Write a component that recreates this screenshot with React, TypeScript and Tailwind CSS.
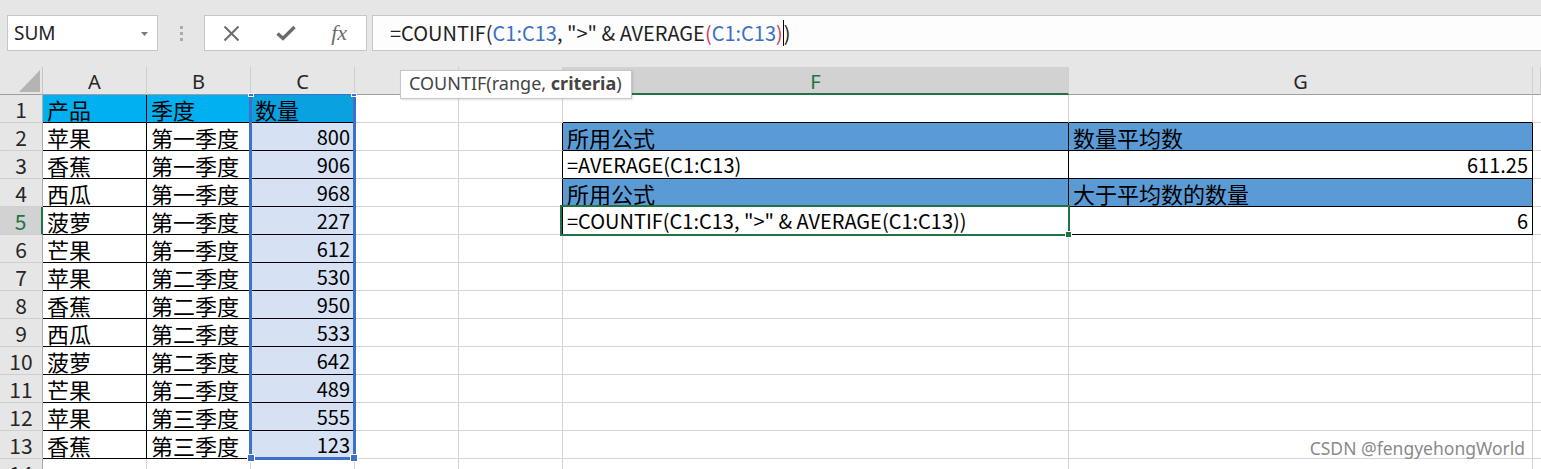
import React from 'react'

// ── Excel-style sheet: COUNTIF above-average demo ──────────────────────────

const COLS = [
  { id: 'A', w: 'w-[104px]' },
  { id: 'B', w: 'w-[104px]' },
  { id: 'C', w: 'w-[104px]' },
  { id: 'D', w: 'w-[104px]' },
  { id: 'E', w: 'w-[104px]' },
  { id: 'F', w: 'w-[506px]' },
  { id: 'G', w: 'w-[464px]' },
  { id: 'H', w: 'flex-1' },
]
const IDS = COLS.map((c) => c.id)

const fruits = ['苹果', '香蕉', '西瓜', '菠萝', '芒果', '苹果', '香蕉', '西瓜', '菠萝', '芒果', '苹果', '香蕉']
const quarters = ['第一季度', '第一季度', '第一季度', '第一季度', '第一季度', '第二季度', '第二季度', '第二季度', '第二季度', '第二季度', '第三季度', '第三季度']
const qty = [800, 906, 968, 227, 612, 530, 950, 533, 642, 489, 555, 123]

const data: Record<string, string> = {
  A1: '产品',
  B1: '季度',
  C1: '数量',
  F2: '所用公式',
  G2: '数量平均数',
  F3: '=AVERAGE(C1:C13)',
  G3: '611.25',
  F4: '所用公式',
  G4: '大于平均数的数量',
  F5: '=COUNTIF(C1:C13, ">" & AVERAGE(C1:C13))',
  G5: '6',
}
fruits.forEach((f, i) => {
  data[`A${i + 2}`] = f
  data[`B${i + 2}`] = quarters[i]
  data[`C${i + 2}`] = String(qty[i])
})

const rightAligned = (r: number, c: string) =>
  (c === 'C' && r >= 2 && r <= 13) || (c === 'G' && (r === 3 || r === 5))

const boxed = (r: number, c: string) =>
  (r >= 1 && r <= 13 && ['A', 'B', 'C'].includes(c)) || (r >= 2 && r <= 5 && ['F', 'G'].includes(c))

function fill(r: number, c: string) {
  if (r === 1 && (c === 'A' || c === 'B')) return 'bg-[#00b0f0]'
  if (r === 1 && c === 'C') return 'bg-[#0aa1e0]'
  if (c === 'C' && r >= 2 && r <= 13) return 'bg-[#d6e1f3]'
  if ((r === 2 || r === 4) && (c === 'F' || c === 'G')) return 'bg-[#5b9bd5]'
  return 'bg-white'
}

const isCjk = (s: string) => /[\u4e00-\u9fff]/.test(s)

function Cell({ r, col }: { r: number; col: (typeof COLS)[number] }) {
  const idx = IDS.indexOf(col.id)
  const next = IDS[idx + 1]
  const rb = boxed(r, col.id) || (next ? boxed(r, next) : false)
  const bb = boxed(r, col.id) || boxed(r + 1, col.id)
  const value = data[`${col.id}${r}`] ?? ''
  return (
    <div
      className={[
        col.w,
        'shrink-0 h-full flex items-end pb-[2px] px-[4px] border-r border-b whitespace-nowrap text-black',
        rb ? 'border-r-black' : 'border-r-[#d4d4d4]',
        bb ? 'border-b-black' : 'border-b-[#d4d4d4]',
        rightAligned(r, col.id) ? 'justify-end' : 'justify-start',
        isCjk(value) ? 'text-[22px]' : 'text-[20px]',
        fill(r, col.id),
      ].join(' ')}
    >
      {value}
    </div>
  )
}

function HeaderRow() {
  return (
    <div className="flex h-[28px] font-['Noto_Sans',sans-serif] text-[20px] leading-[20px]">
      <div className="w-[43px] shrink-0 border-r border-b border-r-[#c6c6c6] border-b-[#9e9e9e] relative">
        <svg className="absolute left-[19px] top-[3px]" width="21" height="22" viewBox="0 0 21 22">
          <polygon points="21,0 21,22 0,22" fill="#b4b4b4" />
        </svg>
      </div>
      {COLS.map((c) => (
        <div
          key={c.id}
          className={[
            c.w,
            'shrink-0 flex items-end justify-center border-r border-r-[#cfcfcf]',
            c.id === 'F'
              ? 'bg-[#d2d2d2] text-[#217346] border-b-2 border-b-[#217346] pb-[1px]'
              : 'text-[#262626] border-b border-b-[#9e9e9e] pb-[2px]',
          ].join(' ')}
        >
          {c.id === 'H' ? '' : c.id}
        </div>
      ))}
    </div>
  )
}

function SheetRow({ r }: { r: number }) {
  const active = r === 5
  return (
    <div className="flex h-[28px]">
      <div
        className={[
          'w-[43px] shrink-0 flex items-end justify-center pb-[2px] border-b border-b-[#cfcfcf] text-[21px]',
          active
            ? 'bg-[#d2d2d2] text-[#217346] border-r-2 border-r-[#217346]'
            : 'bg-[#e6e6e6] text-[#262626] border-r border-r-[#ababab]',
        ].join(' ')}
      >
        {r}
      </div>
      {COLS.map((c) => (
        <Cell key={c.id} r={r} col={c} />
      ))}
    </div>
  )
}

function Toolbar() {
  return (
    <div className="h-[67px] pt-[15px] flex items-start">
      <div className="ml-[7px] w-[151px] h-[36px] shrink-0 bg-white border border-[#c6c6c6] flex items-center pl-[6px] relative font-['Noto_Sans',sans-serif] text-[19px] text-[#222]">
        SUM
        <svg className="absolute left-[133px] top-[16px]" width="7" height="4" viewBox="0 0 7 4">
          <polygon points="0,0 7,0 3.5,4" fill="#7a7a7a" />
        </svg>
      </div>
      <div className="w-[46px] h-[36px] shrink-0 flex flex-col items-center justify-center gap-[3px]">
        <span className="block w-[3px] h-[3px] bg-[#ababab]" />
        <span className="block w-[3px] h-[3px] bg-[#ababab]" />
        <span className="block w-[3px] h-[3px] bg-[#ababab]" />
      </div>
      <div className="w-[163px] h-[36px] shrink-0 bg-white border border-[#c6c6c6] flex items-center">
        <div className="flex-1 flex justify-center">
          <svg width="17" height="17" viewBox="0 0 17 17">
            <path d="M1.5 1.5 L15.5 15.5 M15.5 1.5 L1.5 15.5" stroke="#6b6b6b" strokeWidth="2" fill="none" />
          </svg>
        </div>
        <div className="flex-1 flex justify-center">
          <svg width="20" height="16" viewBox="0 0 20 16">
            <path d="M1.5 8.5 L7 13.5 L18.5 2" stroke="#6b6b6b" strokeWidth="3.4" fill="none" />
          </svg>
        </div>
        <div className="flex-1 flex justify-center font-['Liberation_Serif',serif] italic text-[22px] leading-[22px] text-[#6b6b6b]">
          fx
        </div>
      </div>
      <div className="ml-[5px] flex-1 h-[36px] bg-[#fdfdfd] border border-r-0 border-[#c6c6c6] flex items-center pl-[17px] text-[20px] leading-[24px] text-[#222] whitespace-nowrap">
        <span>=COUNTIF(</span>
        <span className="text-[#3c6fc4]">C1:C13</span>
        <span className="whitespace-pre">, "&gt;" &amp; AVERAGE</span>
        <span className="text-[#d23a5e]">(</span>
        <span className="text-[#3c6fc4]">C1:C13</span>
        <span className="text-[#d23a5e]">)</span>
        <span className="inline-block w-[1px] h-[26px] bg-black" />
        <span>)</span>
      </div>
    </div>
  )
}

export default function App() {
  return (
    <div className="relative w-[1541px] h-[469px] overflow-hidden bg-[#e6e6e6] font-['Noto_Sans_CJK_SC','Noto_Sans',sans-serif] text-[22px] leading-[22px]">
      <Toolbar />
      <HeaderRow />
      {Array.from({ length: 14 }, (_, i) => (
        <SheetRow key={i + 1} r={i + 1} />
      ))}

      {/* formula reference range C1:C13 */}
      <div className="absolute left-[249px] top-[94px] w-[107px] h-[366px] border-x-[3px] border-b-[3px] border-t border-[#3f6fc6]" />
      <div className="absolute left-[248px] top-[93px] w-[6px] h-[4px] bg-[#3f6fc6] border border-white" />
      <div className="absolute left-[351px] top-[93px] w-[6px] h-[4px] bg-[#3f6fc6] border border-white" />
      <div className="absolute left-[248px] top-[455px] w-[6px] h-[6px] bg-[#3f6fc6] outline outline-1 outline-white" />
      <div className="absolute left-[351px] top-[455px] w-[6px] h-[6px] bg-[#3f6fc6] outline outline-1 outline-white" />

      {/* active cell F5 */}
      <div className="absolute left-[560px] top-[205px] w-[510px] h-[31px] border-2 border-[#217346]" />
      <div className="absolute left-[1065px] top-[231px] w-[7px] h-[7px] bg-[#217346] border border-white" />

      {/* function tooltip */}
      <div className="absolute left-[400px] top-[70px] w-[232px] h-[29px] bg-white border border-[#c6c6c6] shadow-[1px_1px_2px_rgba(0,0,0,0.12)] pl-[8px] pt-[1px] font-['Noto_Sans',sans-serif] text-[18px] leading-[22px] text-[#444] whitespace-nowrap">
        COUNTIF(range, <span className="font-bold">criteria</span>)
      </div>

      {/* watermark */}
      <div className="absolute right-[16px] top-[438px] font-['Noto_Sans',sans-serif] text-[17.5px] leading-[20px] text-[#8a8a8a]">
        CSDN @fengyehongWorld
      </div>
    </div>
  )
}
